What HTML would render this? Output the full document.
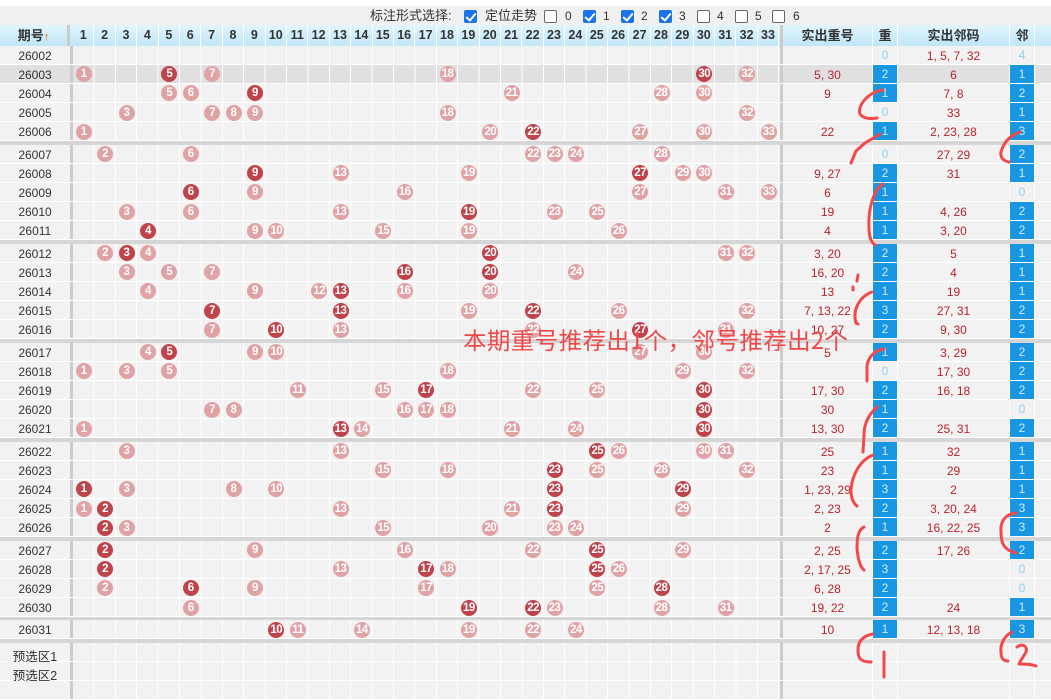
<!DOCTYPE html>
<html><head><meta charset="utf-8"><style>
*{margin:0;padding:0;box-sizing:border-box}
q:before,q:after{content:none}
body{width:1051px;height:686px;overflow:hidden;background:#fff;position:relative;font-family:"Liberation Sans","Noto Sans CJK SC",sans-serif;font-size:12px;color:#333}
#top{position:absolute;left:0;top:6px;width:1051px;height:19px;background:#f0f0f0}
#top span{position:absolute;top:3px;font-size:13px;color:#333;line-height:14px}
.cb{position:absolute;top:4px;width:13px;height:13px;border:1px solid #666;border-radius:2px;background:#fff}
.cb.k{background:#1a73e8;border-color:#1a73e8}
.cb.k:after{content:"";position:absolute;left:3px;top:0px;width:4px;height:8px;border:solid #fff;border-width:0 2px 2px 0;transform:rotate(40deg)}
#bg{position:absolute;left:0;top:45px;width:1051px;height:641px;background:#d6d6d6}
#hd{position:absolute;left:0;top:25px;width:1051px;height:20.5px;background:linear-gradient(#e2f5fd,#bfe6f8)}
#hd span{position:absolute;top:0;height:20.5px;line-height:21px;text-align:center;font-weight:bold;font-size:13px;color:#333;border-right:1px solid #fff}
#hd .h{left:calc(73px + (var(--n) - 1)*21.4px);width:21.4px;font-size:12.5px}
.r{position:absolute;left:0;width:1051px;height:19.2px;
background:linear-gradient(#fff,#fff) 0 100%/100% 1px no-repeat,
repeating-linear-gradient(90deg,transparent 0 20.4px,#fff 20.4px 21.4px) 73px 0/706.2px 100% no-repeat,
linear-gradient(#fff,#fff) 872px 0/1px 100% no-repeat,
linear-gradient(#fff,#fff) 897px 0/1px 100% no-repeat,
linear-gradient(#fff,#fff) 1009px 0/1px 100% no-repeat,
linear-gradient(#fff,#fff) 1034px 0/1px 100% no-repeat,
linear-gradient(#ccc,#ccc) 70px 0/3px 100% no-repeat,
linear-gradient(#ccc,#ccc) 780px 0/3px 100% no-repeat;
background-color:#f2f2f2}
.r.hl{background-color:#e0e0e0}
.r i{position:absolute;left:0;width:70px;top:3px;text-align:center;font-style:normal;font-size:12px;color:#333}
.r b{position:absolute;top:1.6px;left:calc(75.7px + (var(--n) - 1)*21.4px);width:16px;height:16px;border-radius:50%;background:#e0a3a5;color:#fff;font-size:11.5px;line-height:16px;text-align:center;font-weight:bold;letter-spacing:-0.5px}
.r b.d{background:#bf434b}
.r s,.r em{position:absolute;top:3px;text-decoration:none;font-style:normal;text-align:center;color:#b8242c;font-size:12px}
.r s{left:783px;width:89px}
.r em{left:898px;width:111px}
.r u,.r q{position:absolute;top:0;height:18.2px;width:24px;text-decoration:none;text-align:center;line-height:18px;color:#8fd0f5;font-size:12px;quotes:none}
.r u{left:873px}.r q{left:1010px}
.r u.o,.r q.o{background:#1896e2;color:#d0ebff}
#ov{position:absolute;left:463px;top:325px;font-size:23.5px;color:#f04848;white-space:nowrap;letter-spacing:0.4px;font-family:"Noto Sans CJK SC","Liberation Sans",sans-serif;line-height:28px}
svg{position:absolute;left:0;top:0}
</style></head><body>
<div id="top">
<span style="left:370px">标注形式选择:</span>
<div class="cb k" style="left:464px"></div><span style="left:485px">定位走势</span>
<div class="cb" style="left:544px"></div><span style="left:565px;font-size:12px">0</span>
<div class="cb k" style="left:583px"></div><span style="left:603px;font-size:12px">1</span>
<div class="cb k" style="left:621px"></div><span style="left:641px;font-size:12px">2</span>
<div class="cb k" style="left:659px"></div><span style="left:679px;font-size:12px">3</span>
<div class="cb" style="left:697px"></div><span style="left:717px;font-size:12px">4</span>
<div class="cb" style="left:735px"></div><span style="left:755px;font-size:12px">5</span>
<div class="cb" style="left:772px"></div><span style="left:793px;font-size:12px">6</span>
</div>
<div id="bg"></div>
<div id="hd">
<span style="left:0;width:70px;border-right:3px solid #ccc">期号<b style="color:#f06010;font-size:11px">↑</b></span>
<span class="h" style="--n:1">1</span><span class="h" style="--n:2">2</span><span class="h" style="--n:3">3</span><span class="h" style="--n:4">4</span><span class="h" style="--n:5">5</span><span class="h" style="--n:6">6</span><span class="h" style="--n:7">7</span><span class="h" style="--n:8">8</span><span class="h" style="--n:9">9</span><span class="h" style="--n:10">10</span><span class="h" style="--n:11">11</span><span class="h" style="--n:12">12</span><span class="h" style="--n:13">13</span><span class="h" style="--n:14">14</span><span class="h" style="--n:15">15</span><span class="h" style="--n:16">16</span><span class="h" style="--n:17">17</span><span class="h" style="--n:18">18</span><span class="h" style="--n:19">19</span><span class="h" style="--n:20">20</span><span class="h" style="--n:21">21</span><span class="h" style="--n:22">22</span><span class="h" style="--n:23">23</span><span class="h" style="--n:24">24</span><span class="h" style="--n:25">25</span><span class="h" style="--n:26">26</span><span class="h" style="--n:27">27</span><span class="h" style="--n:28">28</span><span class="h" style="--n:29">29</span><span class="h" style="--n:30">30</span><span class="h" style="--n:31">31</span><span class="h" style="--n:32">32</span><span class="h" style="--n:33">33</span>
<span style="left:780px;width:93px;border-left:3px solid #ccc">实出重号</span>
<span style="left:873px;width:25px">重</span>
<span style="left:898px;width:112px">实出邻码</span>
<span style="left:1010px;width:25px">邻</span>
</div>

<div class="r" style="top:45.5px"><i>26002</i><s></s><u>0</u><em>1, 5, 7, 32</em><q>4</q></div>
<div class="r hl" style="top:64.7px"><i>26003</i><b style="--n:1">1</b><b class="d" style="--n:5">5</b><b style="--n:7">7</b><b style="--n:18">18</b><b class="d" style="--n:30">30</b><b style="--n:32">32</b><s>5, 30</s><u class="o">2</u><em>6</em><q class="o">1</q></div>
<div class="r" style="top:83.9px"><i>26004</i><b style="--n:5">5</b><b style="--n:6">6</b><b class="d" style="--n:9">9</b><b style="--n:21">21</b><b style="--n:28">28</b><b style="--n:30">30</b><s>9</s><u class="o">1</u><em>7, 8</em><q class="o">2</q></div>
<div class="r" style="top:103.1px"><i>26005</i><b style="--n:3">3</b><b style="--n:7">7</b><b style="--n:8">8</b><b style="--n:9">9</b><b style="--n:18">18</b><b style="--n:32">32</b><s></s><u>0</u><em>33</em><q class="o">1</q></div>
<div class="r" style="top:122.3px"><i>26006</i><b style="--n:1">1</b><b style="--n:20">20</b><b class="d" style="--n:22">22</b><b style="--n:27">27</b><b style="--n:30">30</b><b style="--n:33">33</b><s>22</s><u class="o">1</u><em>2, 23, 28</em><q class="o">3</q></div>

<div class="r" style="top:144.5px"><i>26007</i><b style="--n:2">2</b><b style="--n:6">6</b><b style="--n:22">22</b><b style="--n:23">23</b><b style="--n:24">24</b><b style="--n:28">28</b><s></s><u>0</u><em>27, 29</em><q class="o">2</q></div>
<div class="r" style="top:163.7px"><i>26008</i><b class="d" style="--n:9">9</b><b style="--n:13">13</b><b style="--n:19">19</b><b class="d" style="--n:27">27</b><b style="--n:29">29</b><b style="--n:30">30</b><s>9, 27</s><u class="o">2</u><em>31</em><q class="o">1</q></div>
<div class="r" style="top:182.9px"><i>26009</i><b class="d" style="--n:6">6</b><b style="--n:9">9</b><b style="--n:16">16</b><b style="--n:27">27</b><b style="--n:31">31</b><b style="--n:33">33</b><s>6</s><u class="o">1</u><em></em><q>0</q></div>
<div class="r" style="top:202.1px"><i>26010</i><b style="--n:3">3</b><b style="--n:6">6</b><b style="--n:13">13</b><b class="d" style="--n:19">19</b><b style="--n:23">23</b><b style="--n:25">25</b><s>19</s><u class="o">1</u><em>4, 26</em><q class="o">2</q></div>
<div class="r" style="top:221.3px"><i>26011</i><b class="d" style="--n:4">4</b><b style="--n:9">9</b><b style="--n:10">10</b><b style="--n:15">15</b><b style="--n:19">19</b><b style="--n:26">26</b><s>4</s><u class="o">1</u><em>3, 20</em><q class="o">2</q></div>

<div class="r" style="top:243.5px"><i>26012</i><b style="--n:2">2</b><b class="d" style="--n:3">3</b><b style="--n:4">4</b><b class="d" style="--n:20">20</b><b style="--n:31">31</b><b style="--n:32">32</b><s>3, 20</s><u class="o">2</u><em>5</em><q class="o">1</q></div>
<div class="r" style="top:262.7px"><i>26013</i><b style="--n:3">3</b><b style="--n:5">5</b><b style="--n:7">7</b><b class="d" style="--n:16">16</b><b class="d" style="--n:20">20</b><b style="--n:24">24</b><s>16, 20</s><u class="o">2</u><em>4</em><q class="o">1</q></div>
<div class="r" style="top:281.9px"><i>26014</i><b style="--n:4">4</b><b style="--n:9">9</b><b style="--n:12">12</b><b class="d" style="--n:13">13</b><b style="--n:16">16</b><b style="--n:20">20</b><s>13</s><u class="o">1</u><em>19</em><q class="o">1</q></div>
<div class="r" style="top:301.1px"><i>26015</i><b class="d" style="--n:7">7</b><b class="d" style="--n:13">13</b><b style="--n:19">19</b><b class="d" style="--n:22">22</b><b style="--n:26">26</b><b style="--n:32">32</b><s>7, 13, 22</s><u class="o">3</u><em>27, 31</em><q class="o">2</q></div>
<div class="r" style="top:320.3px"><i>26016</i><b style="--n:7">7</b><b class="d" style="--n:10">10</b><b style="--n:13">13</b><b style="--n:22">22</b><b class="d" style="--n:27">27</b><b style="--n:31">31</b><s>10, 27</s><u class="o">2</u><em>9, 30</em><q class="o">2</q></div>

<div class="r" style="top:342.5px"><i>26017</i><b style="--n:4">4</b><b class="d" style="--n:5">5</b><b style="--n:9">9</b><b style="--n:10">10</b><b style="--n:27">27</b><b style="--n:30">30</b><s>5</s><u class="o">1</u><em>3, 29</em><q class="o">2</q></div>
<div class="r" style="top:361.7px"><i>26018</i><b style="--n:1">1</b><b style="--n:3">3</b><b style="--n:5">5</b><b style="--n:18">18</b><b style="--n:29">29</b><b style="--n:32">32</b><s></s><u>0</u><em>17, 30</em><q class="o">2</q></div>
<div class="r" style="top:380.9px"><i>26019</i><b style="--n:11">11</b><b style="--n:15">15</b><b class="d" style="--n:17">17</b><b style="--n:22">22</b><b style="--n:25">25</b><b class="d" style="--n:30">30</b><s>17, 30</s><u class="o">2</u><em>16, 18</em><q class="o">2</q></div>
<div class="r" style="top:400.1px"><i>26020</i><b style="--n:7">7</b><b style="--n:8">8</b><b style="--n:16">16</b><b style="--n:17">17</b><b style="--n:18">18</b><b class="d" style="--n:30">30</b><s>30</s><u class="o">1</u><em></em><q>0</q></div>
<div class="r" style="top:419.3px"><i>26021</i><b style="--n:1">1</b><b class="d" style="--n:13">13</b><b style="--n:14">14</b><b style="--n:21">21</b><b style="--n:24">24</b><b class="d" style="--n:30">30</b><s>13, 30</s><u class="o">2</u><em>25, 31</em><q class="o">2</q></div>

<div class="r" style="top:441.5px"><i>26022</i><b style="--n:3">3</b><b style="--n:13">13</b><b class="d" style="--n:25">25</b><b style="--n:26">26</b><b style="--n:30">30</b><b style="--n:31">31</b><s>25</s><u class="o">1</u><em>32</em><q class="o">1</q></div>
<div class="r" style="top:460.7px"><i>26023</i><b style="--n:15">15</b><b style="--n:18">18</b><b class="d" style="--n:23">23</b><b style="--n:25">25</b><b style="--n:28">28</b><b style="--n:32">32</b><s>23</s><u class="o">1</u><em>29</em><q class="o">1</q></div>
<div class="r" style="top:479.9px"><i>26024</i><b class="d" style="--n:1">1</b><b style="--n:3">3</b><b style="--n:8">8</b><b style="--n:10">10</b><b class="d" style="--n:23">23</b><b class="d" style="--n:29">29</b><s>1, 23, 29</s><u class="o">3</u><em>2</em><q class="o">1</q></div>
<div class="r" style="top:499.1px"><i>26025</i><b style="--n:1">1</b><b class="d" style="--n:2">2</b><b style="--n:13">13</b><b style="--n:21">21</b><b class="d" style="--n:23">23</b><b style="--n:29">29</b><s>2, 23</s><u class="o">2</u><em>3, 20, 24</em><q class="o">3</q></div>
<div class="r" style="top:518.3px"><i>26026</i><b class="d" style="--n:2">2</b><b style="--n:3">3</b><b style="--n:15">15</b><b style="--n:20">20</b><b style="--n:23">23</b><b style="--n:24">24</b><s>2</s><u class="o">1</u><em>16, 22, 25</em><q class="o">3</q></div>

<div class="r" style="top:540.5px"><i>26027</i><b class="d" style="--n:2">2</b><b style="--n:9">9</b><b style="--n:16">16</b><b style="--n:22">22</b><b class="d" style="--n:25">25</b><b style="--n:29">29</b><s>2, 25</s><u class="o">2</u><em>17, 26</em><q class="o">2</q></div>
<div class="r" style="top:559.7px"><i>26028</i><b class="d" style="--n:2">2</b><b style="--n:13">13</b><b class="d" style="--n:17">17</b><b style="--n:18">18</b><b class="d" style="--n:25">25</b><b style="--n:26">26</b><s>2, 17, 25</s><u class="o">3</u><em></em><q>0</q></div>
<div class="r" style="top:578.9px"><i>26029</i><b style="--n:2">2</b><b class="d" style="--n:6">6</b><b style="--n:9">9</b><b style="--n:17">17</b><b style="--n:25">25</b><b class="d" style="--n:28">28</b><s>6, 28</s><u class="o">2</u><em></em><q>0</q></div>
<div class="r" style="top:598.1px"><i>26030</i><b style="--n:6">6</b><b class="d" style="--n:19">19</b><b class="d" style="--n:22">22</b><b style="--n:23">23</b><b style="--n:28">28</b><b style="--n:31">31</b><s>19, 22</s><u class="o">2</u><em>24</em><q class="o">1</q></div>

<div class="r" style="top:620.3px"><i>26031</i><b class="d" style="--n:10">10</b><b style="--n:11">11</b><b style="--n:14">14</b><b style="--n:19">19</b><b style="--n:22">22</b><b style="--n:24">24</b><s>10</s><u class="o">1</u><em>12, 13, 18</em><q class="o">3</q></div>

<div class="r" style="top:642.5px"><i style="font-size:12.5px">预选区1</i></div>
<div class="r" style="top:661.7px"><i style="font-size:12.5px">预选区2</i></div>
<div class="r" style="top:680.9px"><i></i></div>

<div id="ov">本期重号推荐出1个，邻号推荐出2个</div>

<svg width="1051" height="686" viewBox="0 0 1051 686" fill="none" stroke="#f24a4a" stroke-width="3" stroke-linecap="round" stroke-linejoin="round">
<path d="M883 90 C868 92 857 106 860 114 C863 119 872 119 877 118"/>
<path d="M880 134 L865 143 L856 151 L851 163"/>
<path d="M1020 132 C1008 136 1003 145 1001 152 C1000 158 1004 161 1009 162"/>
<path d="M883 184 C873 190 868 210 869 228 C869 236 871 242 875 245"/>
<path d="M858 275 L857 281"/>
<path d="M853 287 L853 290"/>
<path d="M872 292 C860 296 852 310 856 323 L858 324"/>
<path d="M884 349 C874 350 868 358 867 366 L867 381"/>
<path d="M877 407 C868 415 864 425 864 435 L863 452"/>
<path d="M873 455 C860 460 852 475 851 490 C851 497 853 503 857 506"/>
<path d="M864 527 C858 530 857 538 857 548 C858 560 860 567 864 570"/>
<path d="M1016 513 C1005 514 1000 522 1001 532 C1001 545 1005 550 1016 553"/>
<path d="M873 634 C862 636 858 642 858 650 C858 658 860 662 871 662"/>
<path d="M884 652 L884 677"/>
<path d="M1012 632 C1004 636 1000 645 1001 652 C1001 658 1003 661 1008 661"/>
<path d="M1017 647 C1022 643 1028 646 1026 652 C1024 656 1020 661 1019 664 C1025 664 1031 664 1036 666"/>
</svg>
</body></html>
